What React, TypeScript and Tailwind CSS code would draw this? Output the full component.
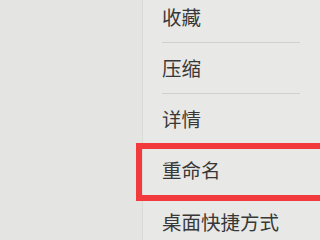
import React from "react";

const items = ["收藏", "压缩", "详情", "重命名", "桌面快捷方式"];

const App = () => {
  return (
    <div
      className="relative flex h-[240px] w-[320px] overflow-hidden bg-[#e4e4e2]"
      style={{ fontFamily: '"Noto Sans CJK SC", "Noto Sans", sans-serif' }}
    >
      <div className="h-full w-[143px] shrink-0 border-r border-[#d9d9d7] bg-[#e4e4e2]"></div>
      <ul className="-mt-[8px] flex flex-1 flex-col bg-[#e8e8e6] pl-[19px] pr-[20px]">
        {items.map((label, i) => (
          <li
            key={i}
            className={`flex h-[51px] shrink-0 items-center text-[19.5px] text-[#383838] ${
              i < items.length - 1 ? "border-b border-[#d0d0ce]" : ""
            }`}
          >
            {label}
          </li>
        ))}
      </ul>
      {/* highlight annotation round the rename row */}
      <div className="absolute left-[136px] top-[143px] h-[58px] w-[200px] border-[6px] border-[#f2393b]"></div>
    </div>
  );
};

export default App;
